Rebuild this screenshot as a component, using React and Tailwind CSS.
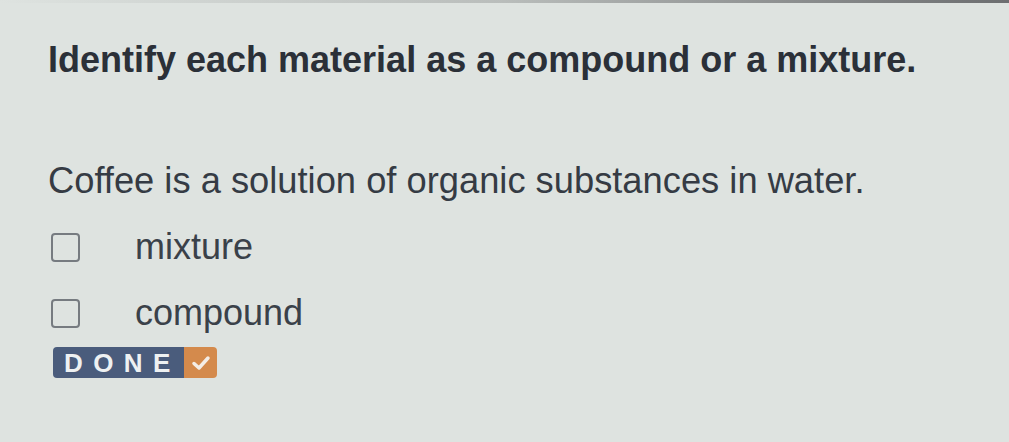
export default function App() {
  return (
    <div className="w-[1009px] h-[442px] bg-[#dee3e0] overflow-hidden" style={{ fontFamily: '"Liberation Sans", Arial, sans-serif' }}>
      <div className="h-[3px] bg-gradient-to-r from-[#dee3e0] via-[#b9bdbb] to-[#6c6e70]" />
      <div className="pl-[48px] pt-[39px]">
        <h1 className="text-[36px] leading-none font-bold text-[#2b3038]">
          Identify each material as a compound or a mixture.
        </h1>
        <p className="mt-[85px] text-[36.3px] leading-none text-[#353b44]">
          Coffee is a solution of organic substances in water.
        </p>

        <div className="mt-[30px] flex flex-col gap-[30px]">
          {['mixture', 'compound'].map(label => (
            <label key={label} className="flex items-center h-[36px]">
              <span className="ml-[3px] w-[29px] h-[29px] border-2 border-[#767b80] rounded-[4px]" />
              <span className="ml-[55px] text-[36px] leading-none text-[#3a4149]">{label}</span>
            </label>
          ))}
        </div>

        <button className="mt-[16px] ml-[5px] flex h-[31px] w-[164px] rounded-[4px] overflow-hidden">
          <span className="flex-1 bg-[#4a5c7c] text-[#eef1f2] font-bold text-[26px] leading-none tracking-[0.4em] flex items-center pl-[11px]">
            DONE
          </span>
          <span className="w-[33px] bg-[#d48a4c] flex items-center justify-center">
            <svg width="20" height="16" viewBox="0 0 20 16" fill="none">
              <path d="M3 8.5 L8 13 L17 3" stroke="#f4ede6" strokeWidth="3.5" strokeLinecap="round" strokeLinejoin="round" />
            </svg>
          </span>
        </button>
      </div>
    </div>
  );
}
